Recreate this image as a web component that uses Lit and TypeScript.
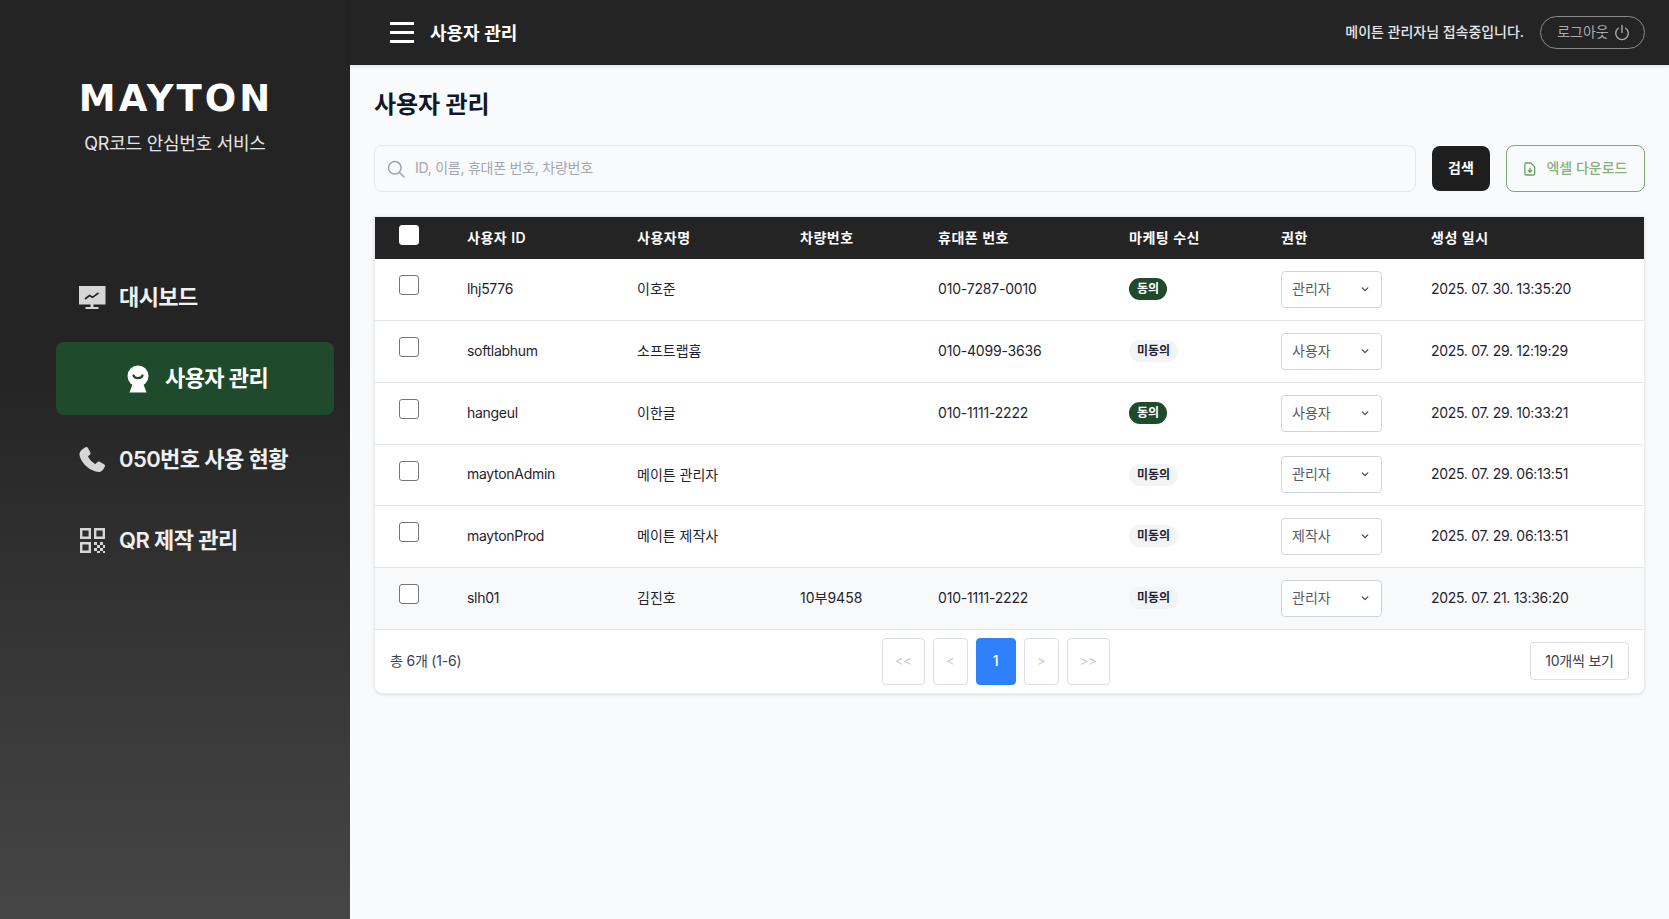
import { LitElement, html, css, svg } from "lit";
import { customElement } from "lit/decorators.js";

const rows = [
  { id: "lhj5776", name: "이호준", car: "", phone: "010-7287-0010", ok: true, role: "관리자", date: "2025. 07. 30. 13:35:20" },
  { id: "softlabhum", name: "소프트랩흄", car: "", phone: "010-4099-3636", ok: false, role: "사용자", date: "2025. 07. 29. 12:19:29" },
  { id: "hangeul", name: "이한글", car: "", phone: "010-1111-2222", ok: true, role: "사용자", date: "2025. 07. 29. 10:33:21" },
  { id: "maytonAdmin", name: "메이튼 관리자", car: "", phone: "", ok: false, role: "관리자", date: "2025. 07. 29. 06:13:51" },
  { id: "maytonProd", name: "메이튼 제작사", car: "", phone: "", ok: false, role: "제작사", date: "2025. 07. 29. 06:13:51" },
  { id: "slh01", name: "김진호", car: "10부9458", phone: "010-1111-2222", ok: false, role: "관리자", date: "2025. 07. 21. 13:36:20" },
];

const iconMonitor = svg`<svg width="28" height="26" viewBox="0 0 28 26"><path fill="#d6d6d6" d="M1 1h26.500v18.500H1z"/><path fill="#d6d6d6" d="M12.500 19h3v3h-3zM7.500 22h13v2h-13z"/><path fill="none" stroke="#222" stroke-width="1.600" d="M7 14l4.500-3.500 3 1.800L20.500 8"/></svg>`;
const iconUser = svg`<svg width="24" height="28" viewBox="0 0 24 28"><circle cx="12" cy="11" r="10.500" fill="#fff"/><path fill="#fff" d="M7 18h10l3.500 9.500h-17z"/><path fill="none" stroke="#1f4a2c" stroke-width="2.200" stroke-linecap="round" d="M7.500 10.500c1.500 3.500 7.500 3.500 9 0"/></svg>`;
const iconPhone = svg`<svg width="28" height="28" viewBox="0 0 28 28"><path fill="#d6d6d6" d="M7.500 1.200c1-.5 2-.2 2.500.7l2.300 4.300c.5.900.3 1.900-.4 2.500L10 10.300c1 2.700 4.400 6.500 7.500 7.700l1.700-1.800c.6-.7 1.600-.8 2.400-.4l4.500 2.500c.9.500 1.200 1.600.7 2.500-1.200 2.300-3 5.300-5.500 5.100C11.500 25.600 1.800 15.500 1.500 8.200c-.1-3 3.600-5.800 6-7z"/></svg>`;
const iconQr = svg`<svg width="25" height="25" viewBox="0 0 25 25"><g fill="none" stroke="#d6d6d6" stroke-width="2.400"><path d="M1.200 1.200h8.600v8.600H1.200zM15.200 1.200h8.600v8.600h-8.600zM1.200 15.200h8.600v8.600H1.200z"/></g><g fill="#d6d6d6"><path d="M14 14h3v3h-3zM20 14h3v3h-3zM17 17h3v3h-3zM23 17h2v3h-2zM14 20h3v3h-3zM20 20h3v3h-3zM17 23h3v2h-3zM23 23h2v2h-2z"/></g></svg>`;
const iconSearch = svg`<svg width="18" height="18" viewBox="0 0 18 18"><circle cx="7.800" cy="7.800" r="6.300" fill="none" stroke="#9ca3af" stroke-width="1.500"/><path d="M12.500 12.500l4.500 4.500" stroke="#9ca3af" stroke-width="1.500" stroke-linecap="round"/></svg>`;
const iconPower = svg`<svg width="16" height="17" viewBox="0 0 16 17" fill="none" stroke="#aaa" stroke-width="1.400" stroke-linecap="round"><path d="M8 1.500v7"/><path d="M4.300 4.200a6.300 6.300 0 1 0 7.400 0"/></svg>`;
const iconFile = svg`<svg width="12" height="14" viewBox="0 0 14 16" fill="none" stroke="#6ea066" stroke-width="1.500" stroke-linejoin="round" stroke-linecap="round"><path d="M2.500 1h5.500l4.500 4.500v8a1.500 1.500 0 0 1-1.500 1.500H2.500A1.500 1.500 0 0 1 1 13.500v-11A1.500 1.500 0 0 1 2.500 1z"/><path d="M7 7v4.500M5 9.800l2 1.900 2-1.900"/></svg>`;
const iconChevron = svg`<svg width="8" height="5" viewBox="0 0 10 6" fill="none" stroke="#444" stroke-width="1.500" stroke-linecap="round" stroke-linejoin="round"><path d="M1.500 1l3.500 3.500L8.500 1"/></svg>`;

@customElement("app-root")
export class AppRoot extends LitElement {
  static styles = css`
    :host {
      display: grid;
      grid-template-columns: 350px 1fr;
      height: 919px;
      font-family: "Inter", "Noto Sans CJK KR", sans-serif;
      font-size: 14px;
      color: #1f2430;
      background: #f9fafb;
      overflow: hidden;
    }
    * { box-sizing: border-box; }
    .side {
      background: linear-gradient(180deg, #242424 0%, #242424 40%, #464646 100%);
      display: flex;
      flex-direction: column;
    }
    .brand {
      height: 261px;
      display: flex;
      flex-direction: column;
      align-items: center;
      padding: 78px 0 0 2px;
    }
    .logo {
      font-family: "DejaVu Sans", sans-serif;
      font-weight: 700;
      font-size: 37px;
      line-height: 42px;
      letter-spacing: 3px;
      color: #fff;
    }
    .sub {
      margin: 11px 2px 0 0;
      font-size: 18px;
      line-height: 26px;
      letter-spacing: -0.25px;
      color: #e5e5e5;
    }
    nav {
      display: flex;
      flex-direction: column;
      gap: 8px;
      margin: 0 16px 0 56px;
    }
    .item {
      height: 73px;
      display: flex;
      align-items: center;
      gap: 13px;
      padding-left: 22px;
      font-size: 22px;
      font-weight: 600;
      letter-spacing: -0.6px;
      color: #f0f0f0;
      border-radius: 8px;
    }
    .item svg { display: block; }
    .lbl { padding-bottom: 5px; }
    .ico { width: 28px; display: flex; justify-content: center; }
    .item.active {
      background: #1f4a2c;
      color: #fff;
      padding-left: 68px;
    }
    .main { display: flex; flex-direction: column; min-width: 0; }
    .top {
      height: 65px;
      background: #242424;
      display: flex;
      align-items: center;
      padding: 0 24px 0 40px;
      box-shadow: 0 1px 4px rgba(0, 0, 0, 0.12);
      color: #fff;
    }
    .burger { width: 24px; display: flex; flex-direction: column; gap: 6px; margin-right: 16px; }
    .burger i { display: block; height: 3px; background: #fff; }
    .top-title { font-size: 18px; font-weight: 600; flex: 1; padding-bottom: 2px; }
    .who { font-size: 14px; font-weight: 500; color: #e5e7eb; margin-right: 16px; padding-bottom: 3px; letter-spacing: -0.03px; }
    .logout {
      width: 105px;
      height: 33px;
      border: 1px solid #8a8a8a;
      border-radius: 17px;
      display: flex;
      align-items: center;
      justify-content: center;
      gap: 5px;
      padding-left: 2px;
      color: #aaa;
      font-size: 14px;
    }
    .logout span { padding-bottom: 3px; }
    .content { padding: 0 24px; display: flex; flex-direction: column; }
    h1 {
      margin: 24px 0 0;
      font-size: 24px;
      line-height: 32px;
      font-weight: 700;
      letter-spacing: -0.1px;
      color: #111827;
    }
    .tools { display: flex; gap: 16px; margin-top: 24px; align-items: center; }
    .search {
      flex: 1;
      height: 47px;
      border: 1px solid #e5e7eb;
      border-radius: 8px;
      display: flex;
      align-items: center;
      gap: 10px;
      padding-left: 12px;
      background: #f9fafb;
    }
    .search input {
      flex: 1;
      border: 0;
      outline: 0;
      background: none;
      font: inherit;
      letter-spacing: -0.25px;
      padding: 0 0 3px;
    }
    .search input::placeholder { color: #a3a8b0; opacity: 1; }
    .btn-search {
      width: 58px;
      height: 45px;
      border: 0;
      border-radius: 8px;
      background: #1f1f1f;
      color: #fff;
      padding: 0 0 3px;
      font: 600 14px "Inter", "Noto Sans CJK KR", sans-serif;
    }
    .btn-excel {
      width: 139px;
      height: 47px;
      border: 1px solid #7aa971;
      border-radius: 8px;
      background: #f9fafb;
      color: #86b180;
      font: 500 14px "Inter", "Noto Sans CJK KR", sans-serif;
      display: flex;
      align-items: center;
      justify-content: center;
      gap: 10px;
      padding-left: 1px;
    }
    .btn-excel span { padding-bottom: 3px; }
    .card {
      margin-top: 24px;
      background: #fff;
      border: 1px solid #e9ebef;
      border-radius: 0 0 8px 8px;
      box-shadow: 0 1px 3px rgba(0, 0, 0, 0.1);
    }
    table { width: 100%; border-collapse: collapse; table-layout: fixed; }
    col.c0 { width: 68px; }
    col.c1 { width: 170px; }
    col.c2 { width: 163px; }
    col.c3 { width: 138px; }
    col.c4 { width: 191px; }
    col.c5 { width: 152px; }
    col.c6 { width: 150px; }
    thead tr { background: #242424; height: 42px; }
    th {
      padding: 0 0 2px 24px;
      text-align: left;
      font-size: 14px;
      font-weight: 600;
      letter-spacing: 0.5px;
      color: #fff;
    }
    th.box { padding-bottom: 0; }
    tbody tr { height: 62px; border-bottom: 1px solid #e5e7eb; }
    tbody tr:nth-child(1), tbody tr:nth-child(4) { height: 61px; }
    tbody tr.hl { background: #f8f9fb; }
    td { padding: 0 0 0 24px; font-size: 14px; color: #1f2430; }
    td.t { padding-bottom: 2px; }
    td.l { letter-spacing: -0.3px; }
    td.p { letter-spacing: -0.2px; }
    .cb {
      display: block;
      width: 20px;
      height: 20px;
      border: 1px solid #767676;
      border-radius: 3px;
      background: #fff;
      margin-bottom: 8px;
    }
    thead .cb { border-color: #fff; margin-bottom: 6px; }
    .pill {
      display: inline-block;
      height: 22px;
      line-height: 22px;
      padding: 0 8px;
      border-radius: 11px;
      font-size: 12px;
      font-weight: 600;
      vertical-align: middle;
    }
    .pill.yes { background: #1f4a2c; color: #fff; }
    .pill.no { background: #f3f4f6; color: #1f2430; }
    .sel {
      width: 101px;
      height: 37px;
      border: 1px solid #d1d5db;
      border-radius: 4px;
      background: #fff;
      display: flex;
      align-items: center;
      justify-content: space-between;
      padding: 0 12px 0 10px;
      color: #555b66;
    }
    .sel span { padding-bottom: 3px; }
    .foot {
      height: 63px;
      display: flex;
      align-items: center;
      justify-content: space-between;
      padding: 0 15px;
      letter-spacing: -0.2px;
    }
    .total { color: #374151; padding-bottom: 2px; }
    .pages { display: flex; gap: 8px; }
    .pg {
      height: 47px;
      border: 1px solid #dcdfe4;
      border-radius: 4px;
      display: flex;
      align-items: center;
      justify-content: center;
      color: #c4c8ce;
      background: #fff;
      font-size: 13px;
      padding-bottom: 1px;
    }
    .pg.w2 { width: 43px; }
    .pg.w1 { width: 35px; }
    .pg.cur { width: 40px; background: #2f80fb; border-color: #2f80fb; color: #fff; font-size: 14px; font-weight: 500; }
    .size {
      width: 99px;
      height: 38px;
      border: 1px solid #dcdfe4;
      border-radius: 4px;
      display: flex;
      align-items: center;
      justify-content: center;
      color: #374151;
      padding-bottom: 2px;
    }
  `;

  render() {
    return html`
      <aside class="side">
        <div class="brand">
          <div class="logo">MAYTON</div>
          <div class="sub">QR코드 안심번호 서비스</div>
        </div>
        <nav>
          <div class="item"><span class="ico">${iconMonitor}</span><span class="lbl">대시보드</span></div>
          <div class="item active"><span class="ico">${iconUser}</span><span class="lbl">사용자 관리</span></div>
          <div class="item"><span class="ico">${iconPhone}</span><span class="lbl">050번호 사용 현황</span></div>
          <div class="item"><span class="ico">${iconQr}</span><span class="lbl">QR 제작 관리</span></div>
        </nav>
      </aside>
      <div class="main">
        <header class="top">
          <div class="burger"><i></i><i></i><i></i></div>
          <div class="top-title">사용자 관리</div>
          <div class="who">메이튼 관리자님 접속중입니다.</div>
          <div class="logout"><span>로그아웃</span>${iconPower}</div>
        </header>
        <section class="content">
          <h1>사용자 관리</h1>
          <div class="tools">
            <label class="search">${iconSearch}<input placeholder="ID, 이름, 휴대폰 번호, 차량번호" /></label>
            <button class="btn-search">검색</button>
            <div class="btn-excel">${iconFile}<span>엑셀 다운로드</span></div>
          </div>
          <div class="card">
            <table>
              <colgroup>
                <col class="c0" /><col class="c1" /><col class="c2" /><col class="c3" /><col class="c4" /><col class="c5" /><col class="c6" /><col />
              </colgroup>
              <thead>
                <tr>
                  <th class="box"><span class="cb"></span></th>
                  <th>사용자 ID</th><th>사용자명</th><th>차량번호</th><th>휴대폰 번호</th><th>마케팅 수신</th><th>권한</th><th>생성 일시</th>
                </tr>
              </thead>
              <tbody>
                ${rows.map(
                  (r, i) => html`<tr class=${i === 5 ? "hl" : ""}>
                    <td><span class="cb"></span></td>
                    <td class="t l">${r.id}</td>
                    <td class="t">${r.name}</td>
                    <td class="t">${r.car}</td>
                    <td class="t p">${r.phone}</td>
                    <td><span class="pill ${r.ok ? "yes" : "no"}">${r.ok ? "동의" : "미동의"}</span></td>
                    <td><div class="sel"><span>${r.role}</span>${iconChevron}</div></td>
                    <td class="t l">${r.date}</td>
                  </tr>`
                )}
              </tbody>
            </table>
            <div class="foot">
              <div class="total">총 6개 (1-6)</div>
              <div class="pages">
                <div class="pg w2">&lt;&lt;</div>
                <div class="pg w1">&lt;</div>
                <div class="pg cur">1</div>
                <div class="pg w1">&gt;</div>
                <div class="pg w2">&gt;&gt;</div>
              </div>
              <div class="size">10개씩 보기</div>
            </div>
          </div>
        </section>
      </div>
    `;
  }
}
